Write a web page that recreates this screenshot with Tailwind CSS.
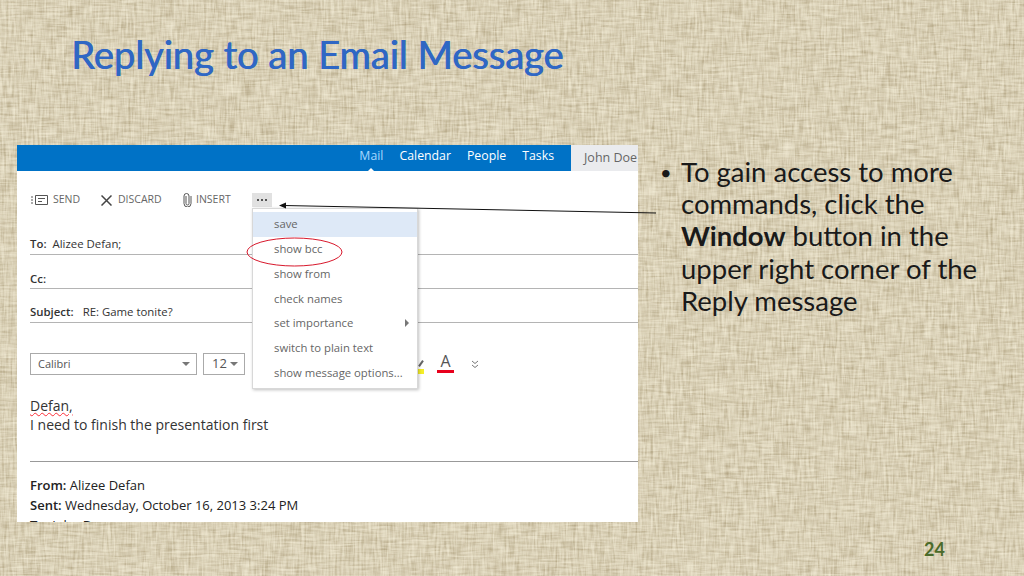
<!DOCTYPE html>
<html lang="en">
<head>
    <meta charset="UTF-8">
    <title>Replying to an Email Message</title>
    <script src="https://cdn.jsdelivr.net/npm/@tailwindcss/browser@4"></script>
</head>
<body class="overflow-hidden">
<!-- slide -->
<div class="relative w-[1024px] h-[576px] overflow-hidden font-['Lato','Noto_Sans',sans-serif] bg-[#dcd3ba]">

    <!-- linen texture: stretched noise, one layer per thread direction -->
    <svg class="absolute inset-0 w-[1024px] h-[576px]" viewBox="0 0 1024 576">
        <filter id="linen" x="0" y="0" width="100%" height="100%" color-interpolation-filters="sRGB">
            <feTurbulence type="fractalNoise" baseFrequency="0.45 0.05" numOctaves="2" seed="4" result="upright"/>
            <feTurbulence type="fractalNoise" baseFrequency="0.05 0.45" numOctaves="2" seed="9" result="across"/>
            <feColorMatrix in="upright" type="matrix" values="0 0 0 0 0.55  0 0 0 0 0.48  0 0 0 0 0.32  0.7 0 0 0 -0.27" result="a"/>
            <feColorMatrix in="across" type="matrix" values="0 0 0 0 0.55  0 0 0 0 0.48  0 0 0 0 0.32  0.7 0 0 0 -0.27" result="b"/>
            <feColorMatrix in="upright" type="matrix" values="0 0 0 0 1  0 0 0 0 0.98  0 0 0 0 0.9  0 0.8 0 0 -0.3" result="c"/>
            <feColorMatrix in="across" type="matrix" values="0 0 0 0 1  0 0 0 0 0.98  0 0 0 0 0.9  0 0.8 0 0 -0.3" result="d"/>
            <feMerge><feMergeNode in="a"/><feMergeNode in="b"/><feMergeNode in="c"/><feMergeNode in="d"/></feMerge>
        </filter>
        <rect width="1024" height="576" filter="url(#linen)"/>
    </svg>

    <div class="relative">
        <h1 class="pt-[29px] pl-[71px] h-[145px] text-[38px] leading-[50px] text-[#2f67c4] [text-shadow:0.7px_0_0_#2f67c4]">Replying to an Email Message</h1>

        <div class="flex">
            <!-- mail window screenshot -->
            <div class="relative ml-[17px] w-[621px] h-[377px] overflow-hidden bg-white font-['Open_Sans',sans-serif]">
                <div class="flex justify-end h-[26px] bg-[#0072c6] text-[12.300px] text-white">
                    <div class="relative flex gap-[16px] pr-[17px] leading-[22px]">
                        <span class="relative text-[#a6d8ff]">Mail
                            <span class="absolute left-[8px] bottom-[-1px] w-0 h-0 border-x-[4px] border-b-[4px] border-x-transparent border-b-white"></span>
                        </span>
                        <span>Calendar</span>
                        <span>People</span>
                        <span>Tasks</span>
                    </div>
                    <div class="w-[67px] pl-[13px] pt-[1px] whitespace-nowrap bg-[#eaebee] text-[#666] text-[12.500px] leading-[24px]">John Doe</div>
                </div>

                <!-- toolbar -->
                <div class="flex items-center h-[18px] mt-[20px] pl-[14px] text-[10.500px] text-[#666]">
                    <svg class="w-[17px] h-[10px] mr-[5px]" viewBox="0 0 17 10" fill="none" stroke="#555" stroke-width="1"><path d="M0 2h2M0 5h2M0 8h2M4.500 .5h12v9h-12zM7 3.500h7M7 6.500h4"/></svg>
                    <span class="w-[33px]">SEND</span>
                    <svg class="w-[11px] h-[11px] ml-[15px] mr-[6px]" viewBox="0 0 11 11" fill="none" stroke="#444" stroke-width="1.500"><path d="M.5 .5l10 10M10.500 .5l-10 10"/></svg>
                    <span class="w-[50px]">DISCARD</span>
                    <svg class="w-[9px] h-[14px] ml-[15px] mr-[4px]" viewBox="0 0 9 14" fill="none" stroke="#555" stroke-width="1"><path d="M3 3v7.500a1.500 1.500 0 0 0 3 0V3a2.500 2.500 0 0 0-5 0v7.500a3.500 3.500 0 0 0 7 0V3"/></svg>
                    <span class="w-[56px]">INSERT</span>
                    <span class="flex items-center justify-center gap-[2px] w-[20px] h-[14px] bg-[#e1e1e1]">
                        <i class="w-[2px] h-[2px] bg-[#555]"></i><i class="w-[2px] h-[2px] bg-[#555]"></i><i class="w-[2px] h-[2px] bg-[#555]"></i>
                    </span>
                </div>

                <!-- address rows -->
                <div class="ml-[13px] mt-[13px] text-[11.400px] text-[#333]">
                    <div class="h-[33px] pt-[12px] leading-[19px] border-b border-[#b4b4b4]"><b class="font-semibold mr-[6px]">To:</b>Alizee Defan;</div>
                    <div class="h-[34px] pt-[14px] leading-[19px] border-b border-[#b4b4b4]"><b class="font-semibold">Cc:</b></div>
                    <div class="h-[34px] pt-[13px] leading-[19px] border-b border-[#b4b4b4]"><b class="font-semibold mr-[9px]">Subject:</b>RE: Game tonite?</div>
                </div>

                <!-- font pickers -->
                <div class="flex items-center gap-[6px] ml-[13px] mt-[30px] text-[#555]">
                    <div class="flex items-center justify-between w-[167px] h-[22px] pl-[7px] pr-[6px] border border-[#aaa] text-[11px]">Calibri<i class="w-0 h-0 border-x-[4px] border-t-[4px] border-x-transparent border-t-[#777]"></i></div>
                    <div class="flex items-center justify-between w-[42px] h-[22px] pl-[8px] pr-[6px] border border-[#aaa] text-[13px]">12<i class="w-0 h-0 border-x-[4px] border-t-[4px] border-x-transparent border-t-[#777]"></i></div>
                </div>

                <!-- body of the message -->
                <div class="ml-[13px] mt-[21px] text-[14px] leading-[19px] text-[#333]">
                    <p class="underline decoration-wavy decoration-red-500 decoration-1 w-fit">Defan,</p>
                    <p>I need to finish the presentation first</p>
                </div>
                <div class="ml-[13px] mt-[27px] border-t border-[#999]"></div>
                <div class="ml-[13px] mt-[13px] text-[13px] leading-[20px] text-[#222]">
                    <p><b class="font-semibold">From:</b> Alizee Defan</p>
                    <p><b class="font-semibold">Sent:</b> Wednesday, October 16, 2013 3:24 PM</p>
                    <p><b class="font-semibold">To:</b> John Doe</p>
                </div>

                <!-- format icons peeking out from under the menu -->
                <div class="absolute left-[401px] top-[208px] flex items-end h-[20px]">
                    <span class="w-[6px] h-[17px] relative">
                        <i class="absolute left-[2px] top-[4px] w-[2px] h-[7px] rotate-[35deg] bg-[#666]"></i>
                        <i class="absolute left-0 top-[13px] w-[6px] h-[5px] bg-[#f5ee28]"></i>
                    </span>
                    <span class="ml-[13px] w-[17px] h-[20px] text-center text-[16px] leading-[17px] text-[#555] border-b-[3px] border-[#e8001c]">A</span>
                    <svg class="ml-[17px] mb-[4px] w-[8px] h-[9px]" viewBox="0 0 8 9" fill="none" stroke="#777"><path d="M1 1l3 2.500 3-2.500M1 5l3 2.500 3-2.500"/></svg>
                </div>

                <!-- dropdown menu -->
                <ul class="absolute left-[235px] top-[63px] w-[166px] h-[181px] pt-[3px] bg-white border border-[#d8d8d8] shadow-[1px_1px_3px_rgba(0,0,0,0.25)] text-[11.300px] leading-[24.850px] text-[#666]">
                    <li class="pl-[21px] bg-[#dee9f7]">save</li>
                    <li class="pl-[21px]">show bcc</li>
                    <li class="pl-[21px]">show from</li>
                    <li class="pl-[21px]">check names</li>
                    <li class="relative pl-[21px]">set importance
                        <i class="absolute right-[8px] top-[8px] w-0 h-0 border-y-[4px] border-l-[4px] border-y-transparent border-l-[#777]"></i>
                    </li>
                    <li class="pl-[21px]">switch to plain text</li>
                    <li class="pl-[21px] whitespace-nowrap">show message options...</li>
                </ul>
            </div>

            <!-- bullet -->
            <div class="flex ml-[22px] w-[340px] pt-[11px] text-[27.500px] leading-[32.200px] text-[#1a1a1a]">
                <span class="w-[21px] text-[20px]">•</span>
                <p class="w-[310px]">To gain access to more commands, click the <b>Window</b> button in the upper right corner of the Reply message</p>
            </div>
        </div>
    </div>

    <!-- ellipse and arrow sit on top of everything -->
    <svg class="absolute left-0 top-0 w-[1024px] h-[576px] pointer-events-none" viewBox="0 0 1024 576" fill="none">
        <ellipse cx="294.500" cy="252" rx="47.500" ry="14" stroke="#d8182c" stroke-width="1"/>
        <path d="M656 213L284 205.500" stroke="#111" stroke-width="1"/>
        <path d="M279 205.500l7-3v6z" fill="#111"/>
    </svg>

    <div class="absolute right-[79px] top-[538px] text-[18px] leading-[22px] font-bold text-[#4b6b2a]">24</div>
</div>
</body>
</html>
